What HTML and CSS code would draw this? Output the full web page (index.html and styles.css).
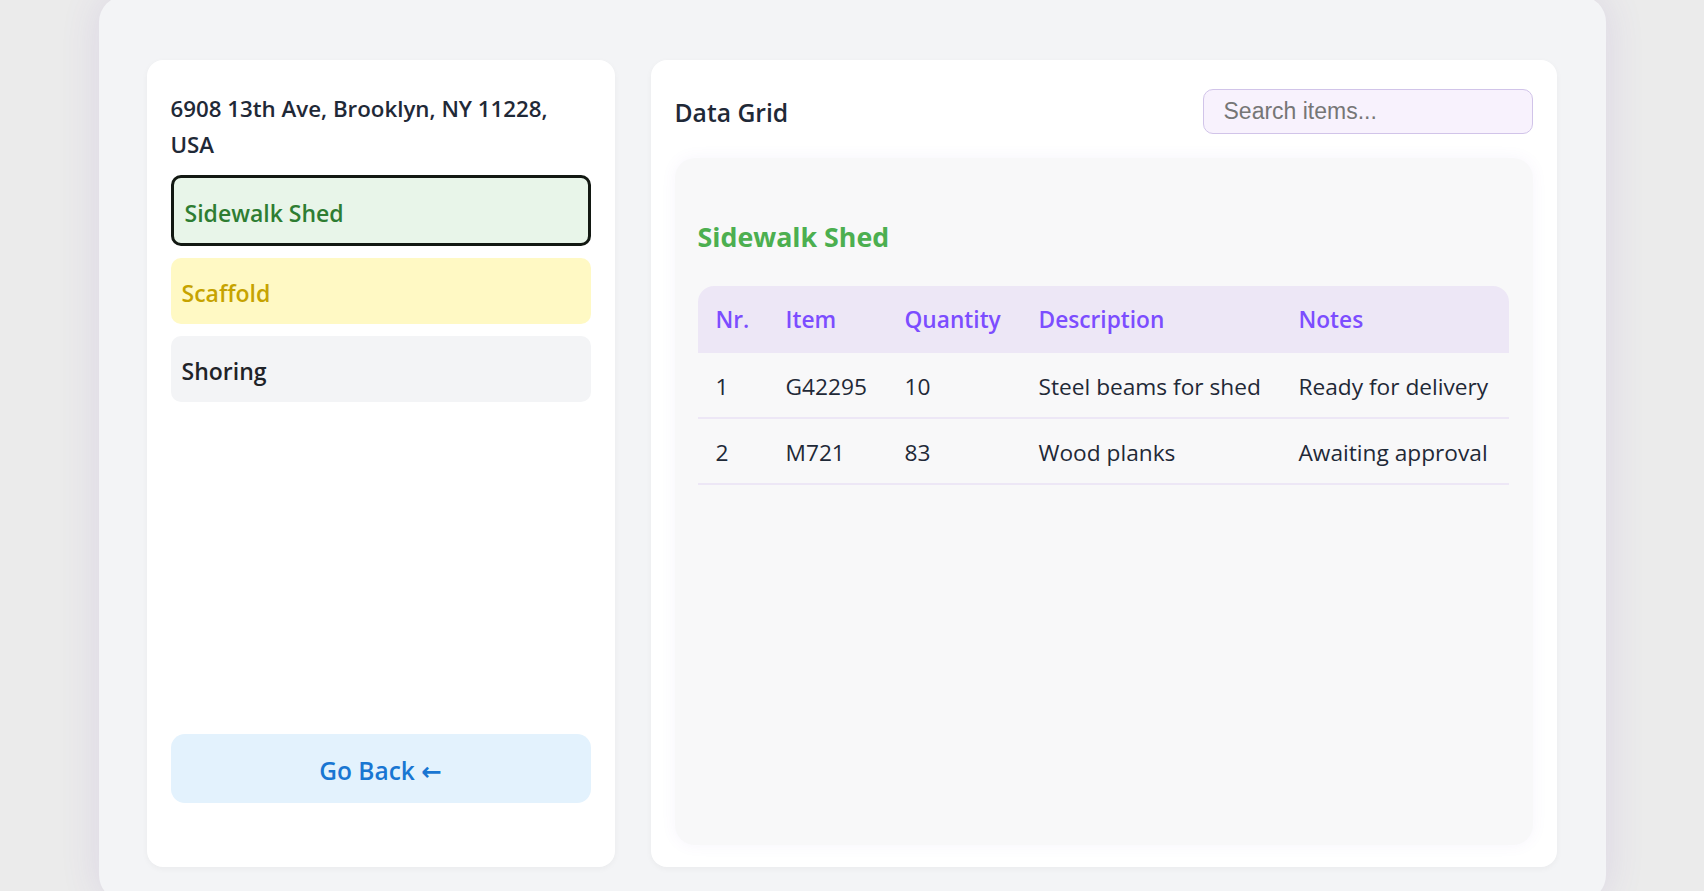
FILE: index.html
```html
<!DOCTYPE html>
<html lang="en">
<head>
<meta charset="utf-8">
<title>Data Grid</title>
<link rel="stylesheet" href="styles.css">
</head>
<body>
<div class="shell">
  <aside class="panel sidebar">
    <h1 class="address">6908 13th Ave, Brooklyn, NY 11228,<br>USA</h1>
    <div class="cats">
      <button class="cat cat-green is-active">Sidewalk Shed</button>
      <button class="cat cat-yellow">Scaffold</button>
      <button class="cat cat-gray">Shoring</button>
    </div>
    <button class="back">Go Back ←</button>
  </aside>
  <main class="panel content">
    <header class="content-head">
      <h2 class="title">Data Grid</h2>
      <input class="search" type="text" placeholder="Search items...">
    </header>
    <section class="grid-card">
      <h3 class="grid-title">Sidewalk Shed</h3>
      <table class="grid">
        <colgroup>
          <col class="c-nr">
          <col class="c-item">
          <col class="c-qty">
          <col class="c-desc">
          <col class="c-notes">
        </colgroup>
        <thead>
          <tr><th>Nr.</th><th>Item</th><th>Quantity</th><th>Description</th><th>Notes</th></tr>
        </thead>
        <tbody>
          <tr><td>1</td><td>G42295</td><td>10</td><td>Steel beams for shed</td><td>Ready for delivery</td></tr>
          <tr><td>2</td><td>M721</td><td>83</td><td>Wood planks</td><td>Awaiting approval</td></tr>
        </tbody>
      </table>
    </section>
  </main>
</div>
</body>
</html>
```

FILE: styles.css
```css
html, body {
  margin: 0;
  height: 100%;
}
body {
  background: #ebebeb;
  font-family: "Open Sans", "DejaVu Sans", sans-serif;
  overflow: hidden;
}
.shell {
  width: 1507px;
  height: 905px;
  margin: -4px auto 0;
  box-sizing: border-box;
  padding: 64px 49px 34px 48px;
  background: #f3f4f6;
  border-radius: 26px;
  box-shadow: 0 0 40px rgba(103, 58, 183, 0.12);
  display: grid;
  grid-template-columns: 468px 1fr;
  gap: 36px;
}
.panel {
  background: #fff;
  border-radius: 16px;
  box-shadow: 0 2px 6px rgba(0, 0, 0, 0.04);
  box-sizing: border-box;
  min-height: 0;
}
.sidebar {
  display: flex;
  flex-direction: column;
  padding: 31px 24px 64px;
}
.address {
  margin: 0 0 12px;
  font-size: 22.3px;
  line-height: 36px;
  font-weight: 600;
  color: #1f2937;
}
.cats {
  display: flex;
  flex-direction: column;
  gap: 12px;
}
.cat {
  display: block;
  width: 100%;
  text-align: left;
  font-family: inherit;
  font-size: 23px;
  font-weight: 600;
  line-height: 30px;
  padding: 20px 11px 16px;
  border: 0;
  border-radius: 10px;
  cursor: pointer;
}
.cat-green {
  background: #e8f5e9;
  color: #2e7d32;
}
.cat-yellow {
  background: #fff9c4;
  color: #c6a300;
}
.cat-gray {
  background: #f3f4f6;
  color: #1f2328;
}
.is-active {
  border: 3px solid #121812;
  padding: 19.5px 11px 15.5px;
  box-shadow: 0 0 0 1px #fff;
}
.back {
  margin-top: auto;
  height: 69px;
  border: 0;
  border-radius: 14px;
  background: #e3f2fd;
  color: #1976d2;
  font-family: inherit;
  font-size: 24.5px;
  font-weight: 600;
  padding: 4px 0 0;
  cursor: pointer;
}
.content {
  display: flex;
  flex-direction: column;
  padding: 29px 24px 22px;
}
.content-head {
  display: flex;
  justify-content: space-between;
  align-items: center;
  margin-bottom: 24px;
}
.title {
  margin: 2px 0 0 0;
  font-size: 24.7px;
  line-height: 33px;
  font-weight: 600;
  color: #1f2937;
}
.search {
  width: 330px;
  height: 45px;
  box-sizing: border-box;
  border: 1px solid #d1c4e9;
  border-radius: 10px;
  background: #f8f2fd;
  padding: 0 20px;
  font-family: "Liberation Sans", Arial, sans-serif;
  font-size: 23px;
  color: #333;
  outline: none;
}
.search::placeholder {
  color: #767676;
}
.grid-card {
  flex: 1;
  background: #f8f8f9;
  border-radius: 20px;
  padding: 24px 24px 24px 23px;
  box-shadow: 0 0 16px rgba(120, 90, 200, 0.06);
}
.grid-title {
  margin: 37px 0 31px;
  font-size: 26.8px;
  line-height: 36px;
  font-weight: 700;
  color: #4caf50;
}
.grid {
  width: 100%;
  border-collapse: separate;
  border-spacing: 0;
  table-layout: fixed;
  font-size: 22.7px;
}
.c-nr { width: 70px; }
.c-item { width: 119px; }
.c-qty { width: 134px; }
.c-desc { width: 260px; }
.grid th {
  background: #ede7f6;
  color: #7c4dff;
  font-weight: 600;
  text-align: left;
  padding: 18.5px 0 18.5px 18px;
  line-height: 30px;
}
.grid th:first-child { border-top-left-radius: 16px; }
.grid th:last-child { border-top-right-radius: 16px; }
.grid td {
  padding: 19px 0 15px 18px;
  line-height: 30px;
  color: #1f2937;
  border-bottom: 2px solid #ede7f6;
  white-space: nowrap;
}
```
